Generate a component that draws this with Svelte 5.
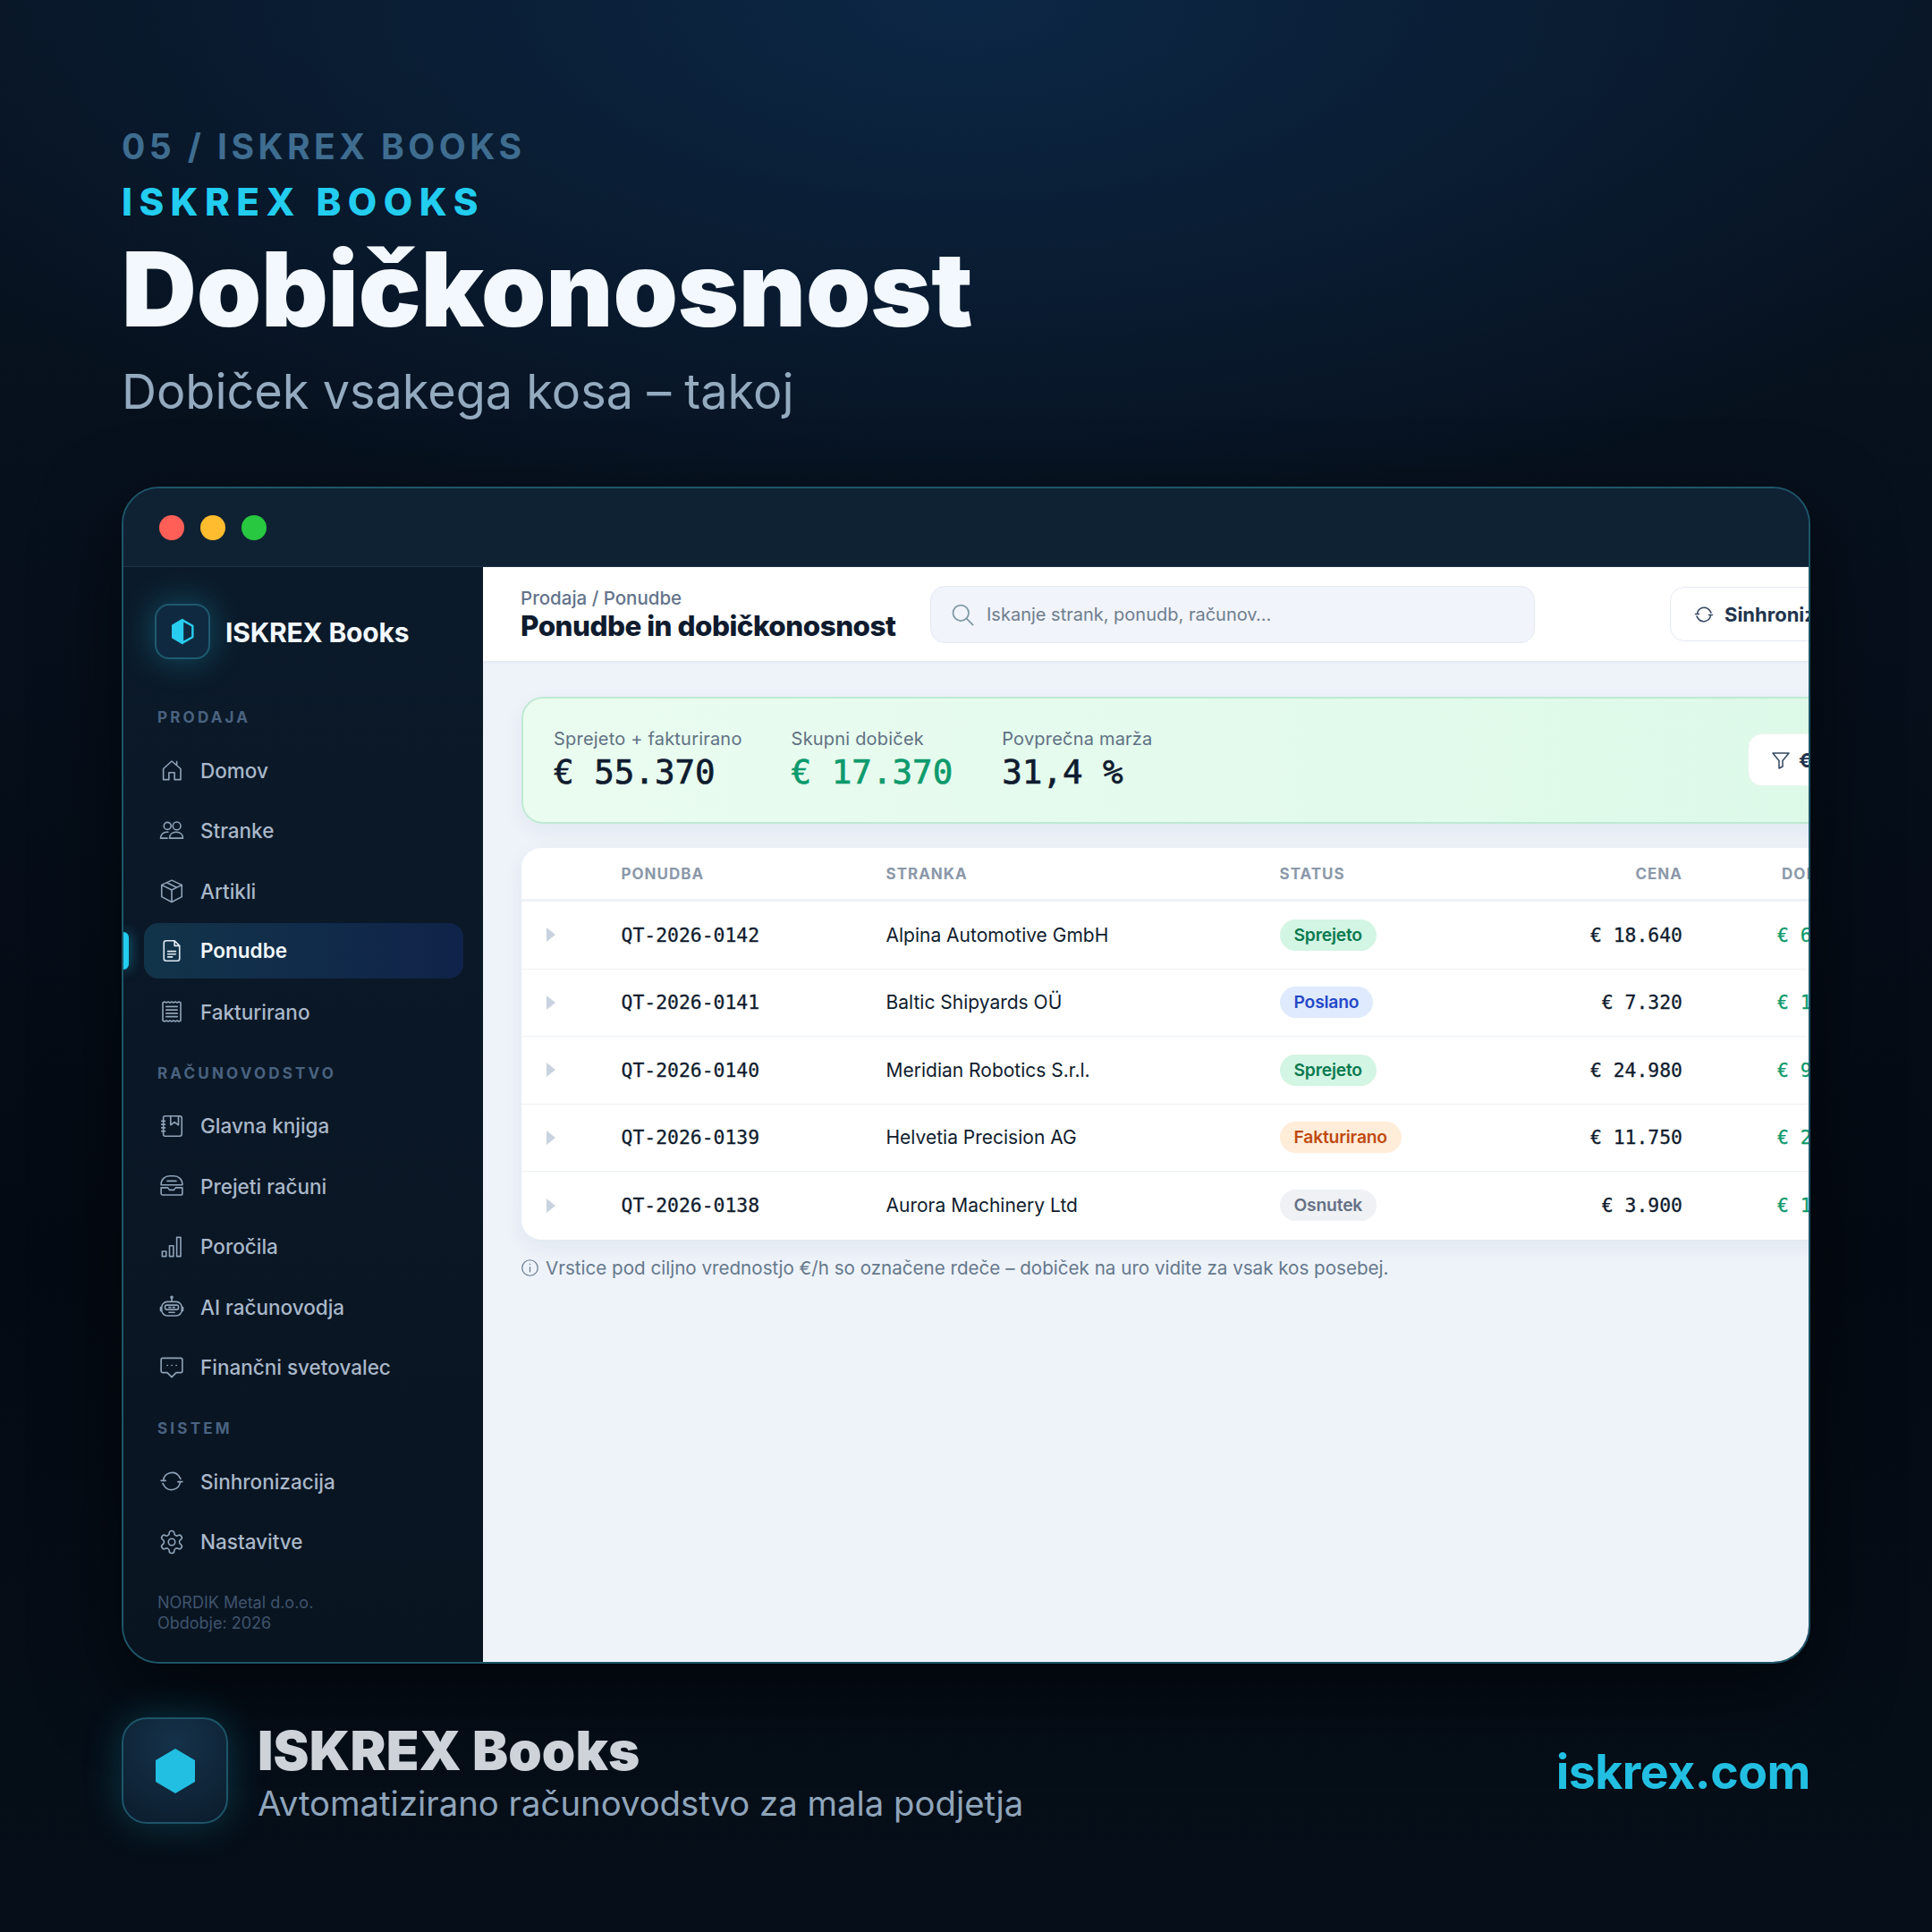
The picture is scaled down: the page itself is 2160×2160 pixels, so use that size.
<script>
  const icons = {
    home: 'M4.5 20.5V10.8L12 4l8 6.8v9.700h-5.500v-6.300h-5v6.300z M16.500 4.500v3.200',
    users: 'M5 7.500a3.200 3.200 0 1 0 6.400 0a3.200 3.200 0 1 0-6.400 0z M13 7.500a3.500 3.500 0 1 0 7 0a3.500 3.500 0 1 0-7 0z M2 18.500c0-3 2.500-5.500 5.500-5.500h1.200 M10 18.500h12c0-3.300-2.500-5.500-6-5.500s-6 2.200-6 5.500z M2 18.500h6',
    box: 'M12 2.500l9 4.200v10.600l-9 4.700l-9-4.700V6.700z M3 6.700l9 4.500l9-4.500 M12 11.200v10.800 M7.500 4.600l9 4.400',
    doc: 'M7 3h7.500L19 7.500V19a2 2 0 0 1-2 2H7a2 2 0 0 1-2-2V5a2 2 0 0 1 2-2z M14.500 3v4.500H19 M8.500 12.500h7 M8.500 15h7 M8.500 17.500h4',
    receipt: 'M4 4l1.600-.8l1.600.8l1.600-.8l1.600.8l1.600-.8l1.600.8l1.600-.8l1.600.8l1.600-.8l1.600.8v16l-1.600.8l-1.600-.8l-1.600.8l-1.600-.8l-1.600.8l-1.600-.8l-1.600.8l-1.600-.8l-1.600.8l-1.600-.8z M7 7.500h10 M7 10.500h10 M7 13.500h10 M7 16.500h10',
    book: 'M6 3h13a2 2 0 0 1 2 2v14a2 2 0 0 1-2 2H6a1.500 1.500 0 0 1-1.500-1.500v-15A1.500 1.500 0 0 1 6 3z M11 3v8l3.500-2.500L18 11V3 M3 7.500h3 M3 10.500h3 M3 13.500h3 M3 16.500h3',
    inbox: 'M2.500 10.500C2.500 6 6 3 10 3h4c4 0 7.500 3 7.500 7.500v.500h-19z M2.500 13.500h6l1.500 2h4l1.500-2h6v5a1.500 1.500 0 0 1-1.500 1.500H4a1.500 1.500 0 0 1-1.500-1.500z M8 7.500h8',
    chart: 'M3.500 16h3.500v4.500H3.500z M10 11h3.500v9.500H10z M16.500 3.500H20v17h-3.500z',
    robot: 'M8 7.500h8a5 5 0 0 1 5 5v2.500a5 5 0 0 1-5 5H8a5 5 0 0 1-5-5v-2.500a5 5 0 0 1 5-5z M12 7.500V5 M11.200 3.500a.8.8 0 1 0 1.600 0a.8.8 0 1 0-1.600 0z M7.500 10.500h9a1.500 1.500 0 0 1 1.500 1.500v1a1.500 1.500 0 0 1-1.500 1.500h-9A1.500 1.500 0 0 1 6 13v-1a1.500 1.500 0 0 1 1.500-1.500z M9.500 17h5 M9.500 12.500h1.500 M13 12.500h1.500 M3 12.500H2v3h1 M21 12.500h1v3h-1',
    chat: 'M4 3.500h16a1.500 1.500 0 0 1 1.500 1.500v10a1.500 1.500 0 0 1-1.500 1.500h-4L12 20.500l-4-4H4A1.500 1.500 0 0 1 2.500 15V5A1.500 1.500 0 0 1 4 3.500z M8 10h.2 M12 10h.2 M16 10h.2',
    sync: 'M4.500 11a7.800 7.800 0 0 1 14-3.500l1.500 2.500 M19.500 13a7.800 7.800 0 0 1-14 3.500L4 14 M2.500 11.500h4 M17.500 12.500h4',
    gear: 'M12.220 2h-.44a2 2 0 0 0-2 2v.18a2 2 0 0 1-1 1.730l-.43.25a2 2 0 0 1-2 0l-.15-.08a2 2 0 0 0-2.730.73l-.22.38a2 2 0 0 0 .73 2.730l.15.1a2 2 0 0 1 1 1.720v.51a2 2 0 0 1-1 1.740l-.15.09a2 2 0 0 0-.73 2.730l.22.38a2 2 0 0 0 2.730.73l.15-.08a2 2 0 0 1 2 0l.43.25a2 2 0 0 1 1 1.730V20a2 2 0 0 0 2 2h.44a2 2 0 0 0 2-2v-.18a2 2 0 0 1 1-1.730l.43-.25a2 2 0 0 1 2 0l.15.08a2 2 0 0 0 2.730-.73l.22-.39a2 2 0 0 0-.73-2.730l-.15-.08a2 2 0 0 1-1-1.740v-.5a2 2 0 0 1 1-1.740l.15-.09a2 2 0 0 0 .73-2.730l-.22-.38a2 2 0 0 0-2.730-.73l-.15.08a2 2 0 0 1-2 0l-.43-.25a2 2 0 0 1-1-1.730V4a2 2 0 0 0-2-2z M9 12a3 3 0 1 0 6 0a3 3 0 1 0-6 0z'
  };
  const nav = [
    { title: 'PRODAJA', items: [
      { label: 'Domov', icon: 'home' },
      { label: 'Stranke', icon: 'users' },
      { label: 'Artikli', icon: 'box' },
      { label: 'Ponudbe', icon: 'doc', active: true },
      { label: 'Fakturirano', icon: 'receipt' }
    ]},
    { title: 'RAČUNOVODSTVO', items: [
      { label: 'Glavna knjiga', icon: 'book' },
      { label: 'Prejeti računi', icon: 'inbox' },
      { label: 'Poročila', icon: 'chart' },
      { label: 'AI računovodja', icon: 'robot' },
      { label: 'Finančni svetovalec', icon: 'chat' }
    ]},
    { title: 'SISTEM', items: [
      { label: 'Sinhronizacija', icon: 'sync' },
      { label: 'Nastavitve', icon: 'gear' }
    ]}
  ];
  const rows = [
    { id: 'QT-2026-0142', client: 'Alpina Automotive GmbH', status: 'Sprejeto', cls: 'green', price: '€ 18.640', profit: '€ 6.150' },
    { id: 'QT-2026-0141', client: 'Baltic Shipyards OÜ', status: 'Poslano', cls: 'blue', price: '€ 7.320', profit: '€ 1.980' },
    { id: 'QT-2026-0140', client: 'Meridian Robotics S.r.l.', status: 'Sprejeto', cls: 'green', price: '€ 24.980', profit: '€ 9.240' },
    { id: 'QT-2026-0139', client: 'Helvetia Precision AG', status: 'Fakturirano', cls: 'orange', price: '€ 11.750', profit: '€ 2.580' },
    { id: 'QT-2026-0138', client: 'Aurora Machinery Ltd', status: 'Osnutek', cls: 'gray', price: '€ 3.900', profit: '€ 1.020' }
  ];
</script>

<div class="page">
  <header class="hero">
    <div class="eyebrow muted">05 / ISKREX BOOKS</div>
    <div class="eyebrow cyan">ISKREX BOOKS</div>
    <h1>Dobičkonosnost</h1>
    <p class="lead">Dobiček vsakega kosa – takoj</p>
  </header>

  <div class="window">
    <div class="titlebar">
      <span class="dot red"></span><span class="dot yellow"></span><span class="dot lime"></span>
    </div>
    <div class="body">
      <aside class="sidebar">
        <div class="brand">
          <div class="brand-box">
            <svg viewBox="0 0 24 24" class="brand-hex">
              <path d="M12 2.500l8.500 4.800v9.400L12 21.500z" fill="none" stroke="#29cdf0" stroke-width="1.800" stroke-linejoin="round"/>
              <path d="M12 1.800L3.500 6.800v10.400L12 22.200z" fill="#29cdf0" stroke="#29cdf0" stroke-width="1" stroke-linejoin="round"/>
            </svg>
          </div>
          <span class="brand-name">ISKREX Books</span>
        </div>
        {#each nav as sec}
          <div class="sec-title">{sec.title}</div>
          {#each sec.items as it}
            <div class="item" class:active={it.active}>
              <svg class="ico" viewBox="0 0 24 24"><path d={icons[it.icon]}/></svg>
              <span>{it.label}</span>
            </div>
          {/each}
        {/each}
        <div class="side-foot">NORDIK Metal d.o.o.<br/>Obdobje: 2026</div>
      </aside>

      <main class="main">
        <div class="topbar">
          <div class="heading">
            <div class="crumb">Prodaja / Ponudbe</div>
            <div class="page-title">Ponudbe in dobičkonosnost</div>
          </div>
          <div class="search">
            <svg class="search-ico" viewBox="0 0 24 24"><path d="M3 10.500a7.500 7.500 0 1 0 15 0a7.500 7.500 0 1 0-15 0z M15.800 15.800L22 22"/></svg>
            <span>Iskanje strank, ponudb, računov…</span>
          </div>
          <div class="btn sync">
            <svg class="btn-ico" viewBox="0 0 24 24"><path d={icons.sync}/></svg>
            <span>Sinhroniziraj</span>
          </div>
        </div>

        <div class="content">
          <section class="banner">
            <div class="stat"><div class="stat-label">Sprejeto + fakturirano</div><div class="stat-val">€ 55.370</div></div>
            <div class="stat"><div class="stat-label">Skupni dobiček</div><div class="stat-val pos">€ 17.370</div></div>
            <div class="stat"><div class="stat-label">Povprečna marža</div><div class="stat-val">31,4 %</div></div>
            <div class="btn filter">
              <svg class="btn-ico" viewBox="0 0 24 24"><path d="M3 4h18l-7 8.500V19l-4 2v-8.500z"/></svg>
              <span>€/h</span>
            </div>
          </section>

          <section class="table">
            <div class="tr head">
              <div></div><div>PONUDBA</div><div>STRANKA</div><div>STATUS</div><div class="num">CENA</div><div class="profit-h">DOBIČEK</div>
            </div>
            {#each rows as r}
              <div class="tr">
                <div class="caret"></div>
                <div class="mono">{r.id}</div>
                <div class="client">{r.client}</div>
                <div><span class="badge {r.cls}">{r.status}</span></div>
                <div class="mono num">{r.price}</div>
                <div class="mono pos">{r.profit}</div>
              </div>
            {/each}
          </section>

          <div class="note">
            <svg class="note-ico" viewBox="0 0 24 24"><path d="M2 12a10 10 0 1 0 20 0a10 10 0 1 0-20 0z M12 11v6 M12 7v.6"/></svg>
            <span>Vrstice pod ciljno vrednostjo €/h so označene rdeče – dobiček na uro vidite za vsak kos posebej.</span>
          </div>
        </div>
      </main>
    </div>
  </div>

  <footer class="foot">
    <div class="foot-box">
      <svg viewBox="0 0 44 50" class="foot-hex"><path d="M22 0L44 13v24L22 50L0 37V13z" fill="#22bfe2"/></svg>
    </div>
    <div class="foot-text">
      <div class="foot-title">ISKREX Books</div>
      <div class="foot-sub">Avtomatizirano računovodstvo za mala podjetja</div>
    </div>
    <div class="foot-url">iskrex.com</div>
  </footer>
</div>

<style>
  :global(body) { margin: 0; background: #050b14; }
  .page {
    width: 2160px; height: 2160px; box-sizing: border-box; overflow: hidden;
    padding: 133px 136px 0;
    font-family: Inter, "Noto Sans", sans-serif;
    background:
      radial-gradient(ellipse 1300px 620px at 50% 0, #0c2745 0%, rgba(12,39,69,0) 100%),
      linear-gradient(180deg, #081423 0%, #040a13 65%, #060f19 100%);
  }
  .hero { height: 411px; }
  .eyebrow { font-weight: 700; line-height: 62px; }
  .muted { font-size: 39px; letter-spacing: 4.450px; color: #3f6d90; }
  .cyan { font-size: 42px; letter-spacing: 7.450px; font-weight: 800; color: #22cdf0; }
  h1 { margin: 2px 0 0; font-size: 116px; line-height: 128px; font-weight: 900; letter-spacing: -.2px; color: #f2f8fd; }
  .lead { margin: 17px 0 0; font-size: 54px; line-height: 68px; color: #94aabf; font-weight: 400; }

  .window {
    height: 1316px; box-sizing: border-box; width: 1888px;
    border: 2px solid #1d5568; border-radius: 42px; overflow: hidden;
    display: flex; flex-direction: column; background: #0f2234;
    box-shadow: 0 30px 90px rgba(0,0,0,.55);
  }
  .titlebar { height: 88px; flex: none; display: flex; align-items: center; gap: 18px; padding-left: 40px; box-sizing: border-box; background: #0f2233; border-bottom: 1px solid #1a3346; }
  .dot { width: 28px; height: 28px; border-radius: 50%; }
  .red { background: #ff5f57; } .yellow { background: #febc2e; } .lime { background: #28c840; }
  .body { flex: 1; display: flex; min-height: 0; }

  .sidebar {
    width: 402px; flex: none; box-sizing: border-box; padding: 41px 22px 0 23px;
    background: linear-gradient(180deg, #0b1a2a, #091421);
  }
  .brand { display: flex; align-items: center; gap: 17px; height: 62px; margin-left: 12px; margin-bottom: 53px; }
  .brand-box {
    width: 62px; height: 62px; box-sizing: border-box; border-radius: 16px;
    border: 2px solid #1f5a6f; background: #0f2a40; display: flex; align-items: center; justify-content: center;
    box-shadow: 0 0 38px rgba(34,205,240,.32);
  }
  .brand-hex { width: 32px; height: 32px; }
  .brand-name { font-size: 30px; font-weight: 700; color: #f2f8fd; letter-spacing: -.2px; padding-top: 2px; }
  .sec-title { font-size: 17px; line-height: 24px; font-weight: 700; letter-spacing: 3.200px; color: #4a6380; margin: 0 0 16px 15px; }
  .item { height: 62px; margin-bottom: 5.500px; display: flex; align-items: center; gap: 17px; padding-left: 16px; border-radius: 16px; font-size: 22.500px; font-weight: 500; color: #a9b8c9; position: relative; }
  .item .ico { width: 30px; height: 30px; fill: none; stroke: #8fa3b8; stroke-width: 1.300; stroke-linecap: round; stroke-linejoin: round; flex: none; }
  .item.active { background: linear-gradient(90deg, #12344a, #10234a); color: #f2f8fd; font-weight: 600; top: -1px; }
  .item.active .ico { stroke: #dfe9f2; }
  .item.active::before { content: ""; position: absolute; left: -24px; top: 10px; width: 7px; height: 42px; border-radius: 0 6px 6px 0; background: #22cdf0; box-shadow: 0 0 14px rgba(34,205,240,.6); }
  .item + .sec-title { margin-top: 25.500px; }
  .side-foot { margin: 25px 0 0 15px; font-size: 18px; line-height: 23px; color: #3f546c; }

  .main { flex: 1; min-width: 0; overflow: hidden; background: #eef3fa; }
  .topbar { width: 1700px; height: 105px; box-sizing: border-box; background: #fff; display: flex; align-items: center; padding-left: 42px; box-shadow: 0 1px 3px rgba(15,35,60,.08); }
  .heading { width: 458px; flex: none; }
  .crumb { font-size: 20.500px; line-height: 26px; color: #64748b; font-weight: 500; padding-top: 2px; }
  .page-title { font-size: 31.400px; line-height: 38px; font-weight: 800; color: #0f1b2e; letter-spacing: -.5px; margin-top: -1px; }
  .search { width: 676px; height: 64px; box-sizing: border-box; flex: none; border: 1px solid #e4e9f1; border-radius: 16px; background: #f1f4fa; display: flex; align-items: center; gap: 13px; padding-left: 21px; font-size: 20px; color: #6f7d8f; }
  .search-ico { width: 28px; height: 28px; fill: none; stroke: #7f98a6; stroke-width: 1.500; stroke-linecap: round; }
  .btn { display: flex; align-items: center; background: #fff; border: 1px solid #e4e9f1; border-radius: 16px; box-sizing: border-box; }
  .sync { margin-left: 151px; height: 61px; width: 300px; padding-left: 25px; gap: 11px; font-size: 22px; font-weight: 700; color: #22344d; flex: none; }
  .btn-ico { width: 24px; height: 24px; fill: none; stroke: #33475f; stroke-width: 1.500; stroke-linecap: round; stroke-linejoin: round; flex: none; }

  .content { width: 1640px; padding: 40px 0 0 43px; box-sizing: border-box; }
  .banner {
    height: 142px; box-sizing: border-box; border: 2px solid #bfe9d3; border-radius: 24px;
    background: linear-gradient(90deg, #eafcf0, #dcf9e8);
    display: flex; align-items: center; gap: 55px; padding: 0 34px 3px; box-shadow: 0 8px 24px rgba(15,35,60,.05);
    position: relative;
  }
  .stat-label { font-size: 20px; line-height: 28px; color: #5f7183; letter-spacing: .2px; }
  .stat-val { font-family: "DejaVu Sans Mono", monospace; font-size: 37.500px; line-height: 46px; font-weight: 400; -webkit-text-stroke: .7px currentColor; color: #0f1b2e; }
  .stat-val.pos { color: #0e9a6c; }
  .filter { position: absolute; left: 1369px; top: 39px; height: 59px; width: 200px; padding-left: 24px; gap: 8px; font-size: 22px; font-weight: 700; color: #22344d; border-color: #eaf6ef; }

  .table { margin-top: 27px; background: #fff; border-radius: 22px; overflow: hidden; box-shadow: 0 8px 24px rgba(15,35,60,.06); }
  .tr { display: grid; grid-template-columns: 111.500px 296px 440px 331px 119.500px 300px; height: 75.500px; box-sizing: border-box; align-items: center; border-bottom: 1px solid #eef1f5; font-size: 21px; color: #101c2e; }
  .tr:last-child { border-bottom: 0; }
  .head { height: 60px; border-bottom: 3px solid #eef1f5; font-size: 17px; font-weight: 700; letter-spacing: 1px; color: #8b98a9; }
  .num { text-align: right; }
  .profit-h { padding-left: 111px; }
  .caret { width: 0; height: 0; margin-left: 28px; border-left: 10px solid #c9d3df; border-top: 8px solid transparent; border-bottom: 8px solid transparent; }
  .mono { font-family: "DejaVu Sans Mono", monospace; font-size: 21.400px; font-weight: 400; -webkit-text-stroke: .3px currentColor; }
  .tr > .mono.pos { color: #0e9a6c; padding-left: 106px; }
  .badge { display: inline-block; height: 35px; line-height: 35px; border-radius: 18px; padding: 0 16px; font-size: 19.300px; font-weight: 600; letter-spacing: -.2px; }
  .green { background: #d3f5e3; color: #0a7a50; }
  .blue { background: #dfeafe; color: #2448c8; }
  .orange { background: #ffedd9; color: #bf4a10; }
  .gray { background: #eff1f5; color: #667085; }
  .note { margin-top: 18px; margin-left: -1px; display: flex; align-items: center; gap: 7px; font-size: 20.600px; line-height: 28px; color: #66788c; }
  .note-ico { width: 21px; height: 21px; fill: none; stroke: #66788c; stroke-width: 1.400; stroke-linecap: round; flex: none; }

  .foot { display: flex; align-items: center; margin-top: 60px; height: 119px; }
  .foot-box { width: 119px; height: 119px; box-sizing: border-box; border: 2px solid #1d5568; border-radius: 28px; background: radial-gradient(circle at 50% 25%, #15324a, #0b1c2c); display: flex; align-items: center; justify-content: center; box-shadow: 0 0 44px rgba(34,205,240,.22); flex: none; }
  .foot-hex { width: 44px; height: 50px; }
  .foot-text { margin-left: 33px; flex: 1; }
  .foot-title { font-size: 60px; line-height: 68px; font-weight: 900; letter-spacing: .15px; color: #cdd3d9; padding-top: 4px; }
  .foot-sub { font-size: 38.300px; line-height: 50px; color: #8fa5bb; }
  .foot-url { font-size: 53.600px; font-weight: 700; color: #22bfe2; letter-spacing: -.5px; padding-top: 2px; }
</style>
